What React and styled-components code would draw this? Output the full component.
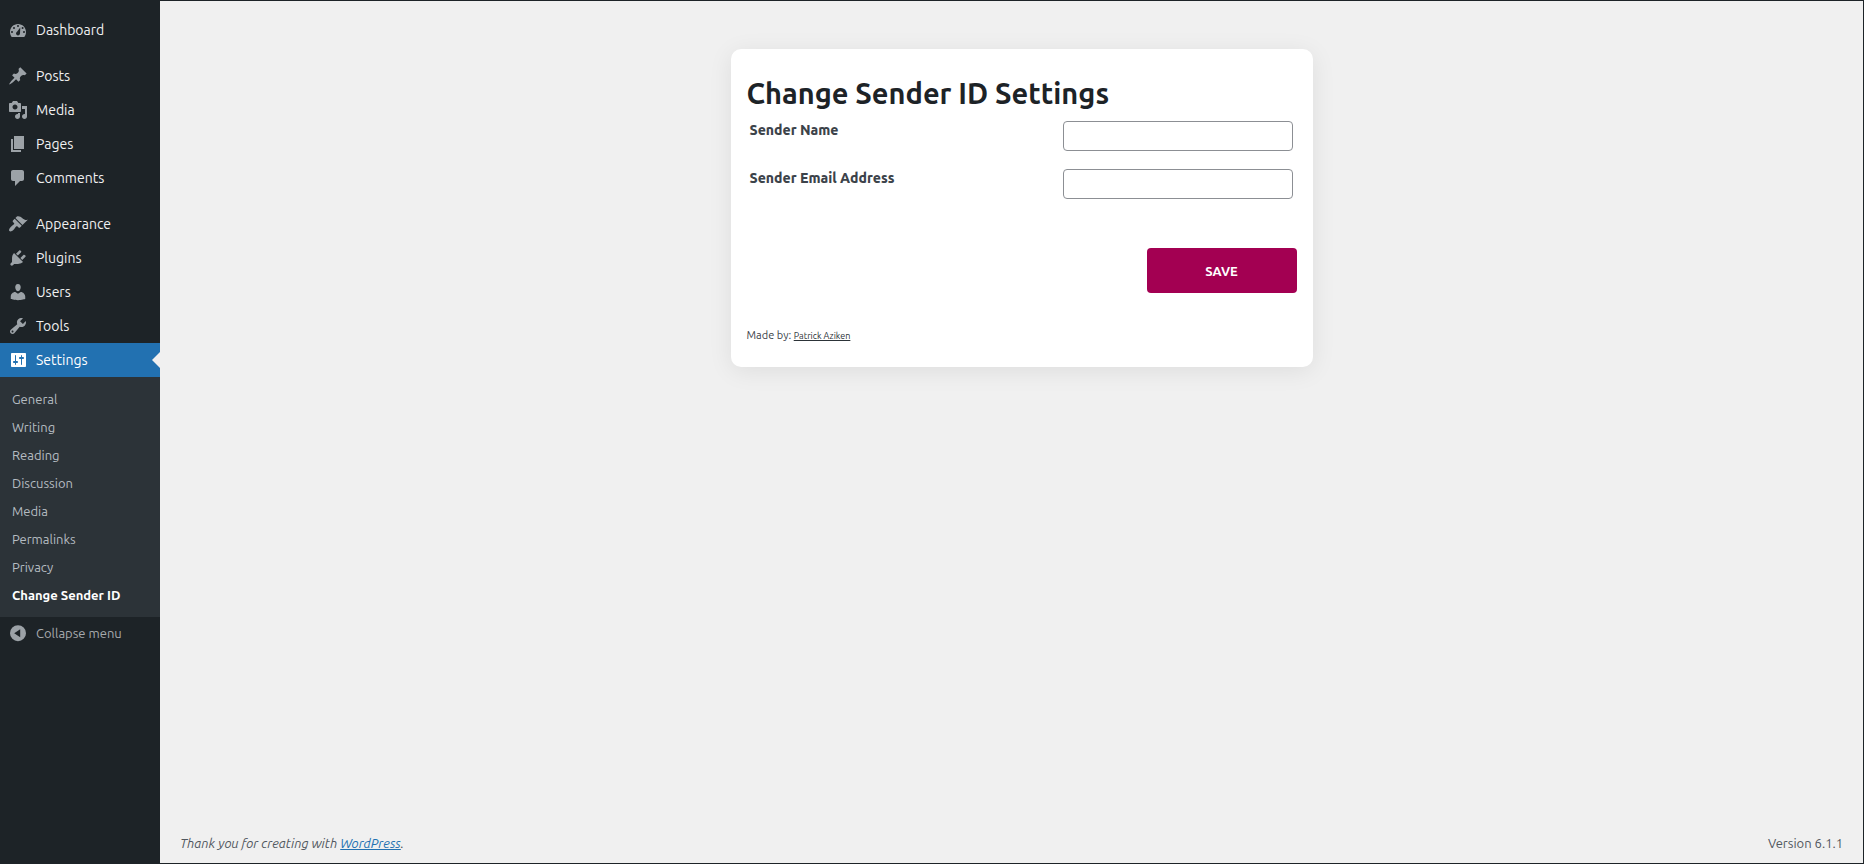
import React from "react";
import styled, { createGlobalStyle } from "styled-components";

const GlobalStyle = createGlobalStyle`
  *, *::before, *::after { box-sizing: border-box; }
  body {
    margin: 0;
    background: #f0f0f0;
    color: #3c434a;
    font-family: Ubuntu, "Noto Sans", "Open Sans", sans-serif;
    font-size: 13px;
    line-height: 18px;
  }
`;

const Page = styled.div`
  display: flex;
  min-height: 100vh;
  border: solid #1d2327;
  border-width: 1px 1px 1px 0;
`;

const Sidebar = styled.nav`
  flex: 0 0 160px;
  padding-top: 12px;
  background: #1d2327;
`;

const MenuList = styled.ul`
  list-style: none;
  margin: 0;
  padding: 0;

  & + & { margin-top: 12px; }
`;

const MenuLink = styled.a`
  position: relative;
  display: flex;
  align-items: center;
  gap: 8px;
  height: 34px;
  padding-left: 8px;
  font-size: 14px;
  color: ${(p) => (p.$current ? "#fff" : "#f0f0f1")};
  background: ${(p) => (p.$current ? "#2271b1" : "transparent")};
  text-decoration: none;
`;

const CurrentArrow = styled.span`
  position: absolute;
  top: 9px;
  right: 0;
  border: 8px solid transparent;
  border-left-width: 0;
  border-right-color: #f0f0f0;
`;

const Icon = styled.svg`
  flex: none;
  width: 20px;
  height: 20px;
  fill: ${(p) => (p.$current ? "#fff" : "#9ca2a7")};
`;

const Submenu = styled.ul`
  list-style: none;
  margin: 0;
  padding: 8px 0;
  background: #2c3338;
`;

const SubmenuLink = styled.a`
  display: block;
  padding: 5px 12px;
  color: ${(p) => (p.$current ? "#fff" : "#b5bcc1")};
  font-weight: ${(p) => (p.$current ? 700 : 400)};
  text-decoration: none;
`;

const CollapseButton = styled.button`
  display: flex;
  align-items: center;
  gap: 8px;
  width: 100%;
  height: 32px;
  padding: 0 0 0 8px;
  border: 0;
  background: none;
  color: #a7aaad;
  font: inherit;
`;

const Content = styled.div`
  flex: 1;
  display: flex;
  flex-direction: column;
  padding: 48px 0 11px 20px;
`;

const Card = styled.main`
  width: 100%;
  max-width: 582px;
  margin: 0 auto;
  padding: 24px 16px 22px;
  border-radius: 10px;
  background: #fff;
  box-shadow: 0 4px 24px rgba(0, 0, 0, 0.08);
`;

const Title = styled.h1`
  margin: 0 0 8px;
  font-size: 29px;
  font-weight: 700;
  line-height: 40px;
  color: #1d2327;
`;

const Field = styled.div`
  display: flex;
  justify-content: space-between;
  align-items: flex-start;
  margin-bottom: 18px;
  padding: 0 4px 0 3px;
`;

const FieldLabel = styled.label`
  font-size: 14px;
  font-weight: 800;
`;

const TextInput = styled.input`
  width: 230px;
  height: 30px;
  padding: 0 8px;
  border: 1px solid #8c8f94;
  border-radius: 4px;
  background: #fff;
  font: inherit;
`;

const Actions = styled.div`
  display: flex;
  justify-content: flex-end;
  padding: 31px 0 33px;
`;

const SaveButton = styled.button`
  width: 150px;
  height: 45px;
  border: 0;
  border-radius: 4px;
  background: #a30052;
  color: #fff;
  font: inherit;
  font-weight: 700;
`;

const Credit = styled.p`
  margin: 0;
  font-size: 11px;
`;

const CreditLink = styled.a`
  font-size: 9px;
  color: #2c3338;
`;

const Footer = styled.footer`
  display: flex;
  justify-content: space-between;
  margin-top: auto;
  padding-right: 20px;
  color: #50575e;
`;

const FooterLink = styled.a`
  color: #2271b1;
`;

const icons = {
  dashboard:
    "M3.76 17h12.48c1.1-1.37 1.76-3.11 1.76-5 0-4.42-3.58-8-8-8s-8 3.58-8 8c0 1.89.66 3.63 1.76 5zM9 6a1 1 0 1 1 2 0 1 1 0 0 1-2 0zM5 8a1 1 0 1 1 2 0 1 1 0 0 1-2 0zM3 12a1 1 0 1 1 2 0 1 1 0 0 1-2 0zM15 12a1 1 0 1 1 2 0 1 1 0 0 1-2 0zM12.3 7.6l-.3 5.9c-.2 1.2-1 1.9-2 1.9s-2-.8-2-1.9c0-.8.4-1.4 1-1.7zM13.6 8a1 1 0 1 1 2 0 1 1 0 0 1-2 0z",
  posts:
    "M10.44 3.02l1.82-1.82 6.36 6.35-1.83 1.82c-1.05-.68-2.48-.57-3.41.36l-.75.75c-.92.93-1.04 2.35-.35 3.41l-1.83 1.82-2.41-2.41-2.8 2.79c-.42.42-3.38 2.71-3.8 2.29s1.86-3.39 2.28-3.81l2.79-2.79L4.1 9.36l1.83-1.82c1.05.69 2.48.57 3.4-.36l.75-.75c.93-.92 1.05-2.35.36-3.41z",
  media:
    "M13 11V4c0-.55-.45-1-1-1h-1.67L9 1H5L3.67 3H2c-.55 0-1 .45-1 1v7c0 .55.45 1 1 1h10c.55 0 1-.45 1-1zM7 4.5c1.38 0 2.5 1.12 2.5 2.5S8.38 9.5 7 9.5 4.5 8.38 4.5 7 5.62 4.5 7 4.5zM14 6h5v10.5c0 1.38-1.12 2.5-2.5 2.5S14 17.88 14 16.5s1.12-2.5 2.5-2.5c.17 0 .34.02.5.05V9h-3V6zm-4 8.05V13h2v3.5c0 1.38-1.12 2.5-2.5 2.5S7 17.88 7 16.5 8.12 14 9.5 14c.17 0 .34.02.5.05z",
  pages: "M6 15V2h10v13H6zm-1 1h8v2H3V5h2v11z",
  comments:
    "M5 2h9c1.1 0 2 .9 2 2v7c0 1.1-.9 2-2 2h-2l-5 5v-5H5c-1.1 0-2-.9-2-2V4c0-1.1.9-2 2-2z",
  appearance:
    "M14.48 11.06L7.41 3.99l1.5-1.5c.5-.56 2.3-.47 3.51.32 1.21.8 1.43 1.28 2.91 2.1 1.18.64 2.45 1.26 4.45.85zm-.71.71L6.7 4.7 4.93 6.47c-.39.39-.39 1.02 0 1.41l1.06 1.06c.39.39.39 1.03 0 1.42-.6.6-1.43 1.11-2.21 1.69-.35.26-.7.53-1.01.84C1.43 14.23.4 16.08 1.4 17.07c.99 1 2.84-.03 4.18-1.36.31-.31.58-.66.85-1.02.57-.78 1.08-1.61 1.69-2.21.39-.39 1.02-.39 1.41 0l1.06 1.06c.39.39 1.02.39 1.41 0z",
  plugins:
    "M13.11 4.36L9.87 7.6 8 5.73l3.24-3.24c.35-.34 1.05-.2 1.56.32.52.51.66 1.21.31 1.55zm-8 1.77l.91-1.12 9.01 9.01-1.19.84c-.71.71-2.63 1.16-3.82 1.16H6.14L4.9 17.26c-.59.59-1.54.59-2.12 0-.59-.58-.59-1.53 0-2.12l1.24-1.24v-3.88c0-1.13.4-3.19 1.09-3.89zm7.26 3.97l3.24-3.24c.34-.35 1.04-.21 1.55.31.52.51.66 1.21.31 1.55l-3.24 3.25z",
  users:
    "M10 9.25c-2.27 0-2.73-3.44-2.73-3.44C7 4.02 7.82 2 9.97 2c2.16 0 2.98 2.02 2.71 3.81 0 0-.41 3.44-2.68 3.44zm0 2.57L12.72 10c2.39 0 4.52 2.33 4.52 4.53v2.49s-3.65 1.13-7.24 1.13c-3.65 0-7.24-1.13-7.24-1.13v-2.49c0-2.25 1.94-4.48 4.47-4.48z",
  tools:
    "M16.68 9.77c-1.34 1.34-3.3 1.67-4.95.99l-5.41 6.52c-.99.99-2.59.99-3.58 0s-.99-2.59 0-3.57l6.52-5.42c-.68-1.65-.35-3.61.99-4.95 1.28-1.28 3.12-1.62 4.72-1.06l-2.89 2.89 2.82 2.82 2.86-2.87c.53 1.58.18 3.39-1.08 4.65zM3.81 16.21c.4.39 1.04.39 1.43 0 .4-.4.4-1.04 0-1.43-.39-.4-1.03-.4-1.43 0-.39.39-.39 1.03 0 1.43z",
  settings:
    "M18 16V4c0-.55-.45-1-1-1H4c-.55 0-1 .45-1 1v12c0 .55.45 1 1 1h13c.55 0 1-.45 1-1zM8 11h1c.55 0 1 .45 1 1s-.45 1-1 1H8v1.5c0 .28-.22.5-.5.5s-.5-.22-.5-.5V13H6c-.55 0-1-.45-1-1s.45-1 1-1h1V5.5c0-.28.22-.5.5-.5s.5.22.5.5V11zm5-2h-1c-.55 0-1-.45-1-1s.45-1 1-1h1V5.5c0-.28.22-.5.5-.5s.5.22.5.5V7h1c.55 0 1 .45 1 1s-.45 1-1 1h-1v5.5c0 .28-.22.5-.5.5s-.5-.22-.5-.5V9z",
  collapse:
    "M10 2.2a8 8 0 1 0 0 16 8 8 0 0 0 0-16zM12.2 14.2L6.2 10.2l6-4z",
};

const menuGroups = [
  [["Dashboard", "dashboard"]],
  [
    ["Posts", "posts"],
    ["Media", "media"],
    ["Pages", "pages"],
    ["Comments", "comments"],
  ],
  [
    ["Appearance", "appearance"],
    ["Plugins", "plugins"],
    ["Users", "users"],
    ["Tools", "tools"],
    ["Settings", "settings"],
  ],
];

const settingsPages = [
  "General",
  "Writing",
  "Reading",
  "Discussion",
  "Media",
  "Permalinks",
  "Privacy",
  "Change Sender ID",
];

function MenuIcon({ name, current }) {
  return (
    <Icon viewBox="0 0 20 20" $current={current} aria-hidden="true">
      <path fillRule="evenodd" d={icons[name]} />
    </Icon>
  );
}

export default function App() {
  return (
    <>
      <GlobalStyle />
      <Page>
        <Sidebar>
          {menuGroups.map((group) => (
            <MenuList key={group[0][0]}>
              {group.map(([label, icon]) => {
                const current = label === "Settings";
                return (
                  <li key={label}>
                    <MenuLink href="#" $current={current}>
                      <MenuIcon name={icon} current={current} />
                      {label}
                      {current && <CurrentArrow />}
                    </MenuLink>
                  </li>
                );
              })}
            </MenuList>
          ))}
          <Submenu>
            {settingsPages.map((label) => (
              <li key={label}>
                <SubmenuLink href="#" $current={label === "Change Sender ID"}>
                  {label}
                </SubmenuLink>
              </li>
            ))}
          </Submenu>
          <CollapseButton type="button">
            <MenuIcon name="collapse" />
            Collapse menu
          </CollapseButton>
        </Sidebar>
        <Content>
          <Card>
            <Title>Change Sender ID Settings</Title>
            <form>
              <Field>
                <FieldLabel htmlFor="sender-name">Sender Name</FieldLabel>
                <TextInput id="sender-name" type="text" />
              </Field>
              <Field>
                <FieldLabel htmlFor="sender-email">Sender Email Address</FieldLabel>
                <TextInput id="sender-email" type="email" />
              </Field>
              <Actions>
                <SaveButton type="submit">SAVE</SaveButton>
              </Actions>
            </form>
            <Credit>
              Made by: <CreditLink href="#">Patrick Aziken</CreditLink>
            </Credit>
          </Card>
          <Footer>
            <em>
              Thank you for creating with <FooterLink href="#">WordPress</FooterLink>.
            </em>
            <span>Version 6.1.1</span>
          </Footer>
        </Content>
      </Page>
    </>
  );
}
